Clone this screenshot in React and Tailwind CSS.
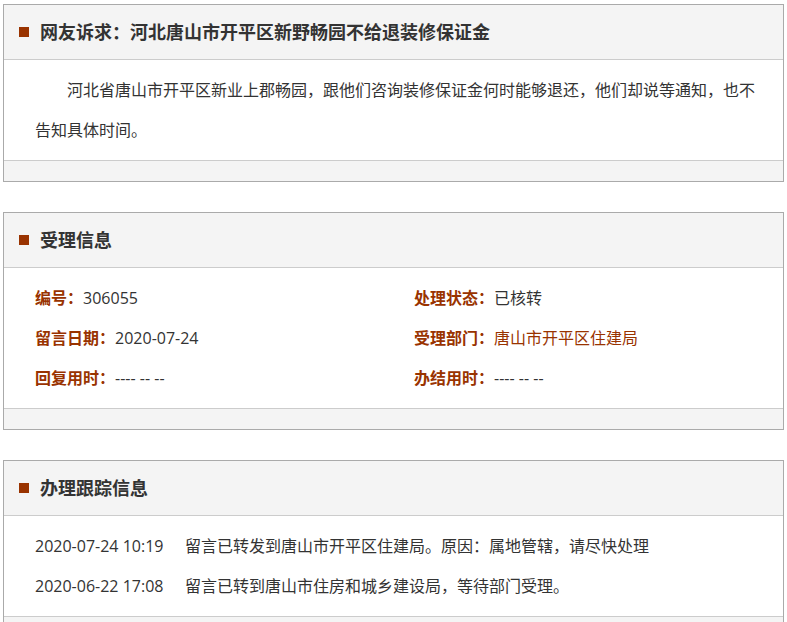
const font = { fontFamily: '"Open Sans", "Noto Sans CJK SC", sans-serif' };

function Panel({ title, children }) {
  return (
    <div className="mx-[3px] border border-[#aaaaaa] bg-white">
      <div className="h-[55px] bg-[#f4f4f4] border-b border-[#cccccc] flex items-center pl-[15px]">
        <span className="w-[10px] h-[10px] bg-[#993300] mr-[11px]" />
        <h2 className="text-[18px] font-bold text-[#333333]">{title}</h2>
      </div>
      <div className="py-[10px] pl-[31px] pr-[20px] text-[16px] leading-[40px] text-[#333333]">
        {children}
      </div>
      <div className="h-[21px] bg-[#f4f4f4] border-t border-[#cccccc]" />
    </div>
  );
}

function Field({ label, value, link }) {
  return (
    <div>
      <span className="font-bold text-[#993300]">{label}：</span>
      <span className={link ? 'text-[#993300]' : 'text-[#333333]'}>{value}</span>
    </div>
  );
}

export default function App() {
  const track = [
    ['2020-07-24 10:19', '留言已转发到唐山市开平区住建局。原因：属地管辖，请尽快处理'],
    ['2020-06-22 17:08', '留言已转到唐山市住房和城乡建设局，等待部门受理。'],
  ];
  return (
    <div className="bg-white min-h-screen pt-[4px] flex flex-col gap-[30px]" style={font}>
      <Panel title="网友诉求：河北唐山市开平区新野畅园不给退装修保证金">
        <p className="indent-[32px]">
          河北省唐山市开平区新业上郡畅园，跟他们咨询装修保证金何时能够退还，他们却说等通知，也不告知具体时间。
        </p>
      </Panel>

      <Panel title="受理信息">
        <div className="grid grid-cols-[379px_1fr]">
          <Field label="编号" value="306055" />
          <Field label="处理状态" value="已核转" />
          <Field label="留言日期" value="2020-07-24" />
          <Field label="受理部门" value="唐山市开平区住建局" link />
          <Field label="回复用时" value="---- -- --" />
          <Field label="办结用时" value="---- -- --" />
        </div>
      </Panel>

      <Panel title="办理跟踪信息">
        {track.map(([t, msg]) => (
          <div key={t} className="flex">
            <span className="w-[150px] shrink-0">{t}</span>
            <span>{msg}</span>
          </div>
        ))}
      </Panel>
    </div>
  );
}
